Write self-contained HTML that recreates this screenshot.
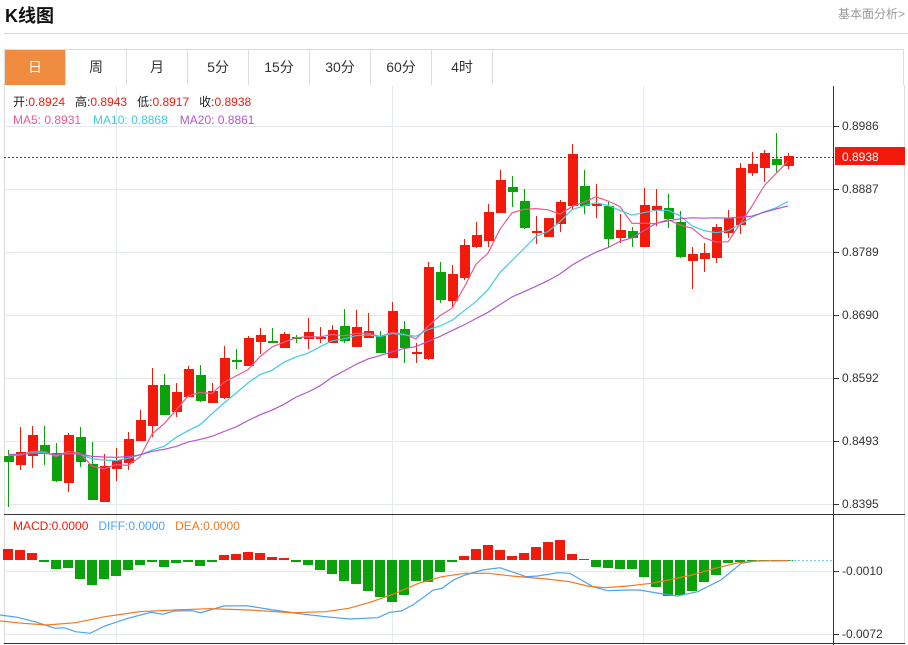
<!DOCTYPE html>
<html><head><meta charset="utf-8"><style>
*{margin:0;padding:0;box-sizing:border-box}
body{width:908px;height:645px;background:#fff;font-family:"Liberation Sans","Noto Sans CJK SC",sans-serif;position:relative;overflow:hidden}
.t{position:absolute;left:5px;top:2px;font-size:18px;font-weight:bold;color:#111}
.r{position:absolute;right:3px;top:5px;font-size:12px;color:#999}
.hr{position:absolute;left:4px;right:0;top:33px;border-top:1px solid #d6d6d6}
.tabs{position:absolute;left:4px;top:49px;width:900px;height:36px;border:1px solid #ddd;border-bottom:none;display:flex}
.tabs div{width:61px;height:35px;border-right:1px solid #ddd;text-align:center;line-height:35px;font-size:14px;color:#333}
.tabs .a{background:#f08c40;color:#fff}
svg{position:absolute;left:0;top:0}
</style></head><body>
<div class="t">K线图</div>
<div class="r">基本面分析&gt;</div>
<div class="hr"></div>
<div class="tabs"><div class="a">日</div><div>周</div><div>月</div><div>5分</div><div>15分</div><div>30分</div><div>60分</div><div>4时</div></div>
<svg id="s" width="908" height="645" font-family="Liberation Sans, Noto Sans CJK SC, sans-serif"></svg>
<script>
var C=[[456,462,450,507,0],[452,465,427,470,1],[435,456,426,468,1],[445,453,426,465,0],[453,481,443,482,0],[435,483,433,492,1],[437,462,427,467,0],[464,500,442,500,0],[466,502,454,502,1],[460,469,448,481,1],[439,463,432,470,1],[420,441,410,441,1],[385,426,368,437,1],[385,415,374,415,0],[392,412,383,417,1],[369,397,366,397,1],[375,401,365,402,0],[391,403,383,403,1],[358,398,346,399,1],[360,361,349,369,0],[338,366,336,366,1],[335,342,328,354,1],[341,343,328,343,0],[334,348,332,348,1],[337,339,335,343,0],[332,339,318,349,1],[337,339,327,343,1],[330,343,325,343,1],[326,341,309,343,0],[327,347,310,347,1],[331,338,313,338,1],[336,353,331,353,0],[311,358,302,358,1],[329,348,321,363,0],[352,353,343,363,1],[267,359,262,360,1],[272,300,262,303,0],[274,301,265,307,1],[245,278,239,280,1],[235,247,222,248,1],[212,241,204,247,1],[180,213,170,213,1],[187,192,176,207,0],[201,228,189,229,0],[231,232,216,244,1],[218,237,218,237,1],[202,224,200,232,1],[154,206,144,210,1],[186,206,170,214,0],[204,205,184,218,1],[206,239,202,247,0],[230,238,214,243,1],[231,238,227,247,0],[205,247,188,247,1],[206,210,189,226,1],[208,219,194,228,0],[222,257,211,258,0],[254,261,247,289,1],[253,259,243,272,1],[227,258,224,263,1],[218,233,210,238,1],[168,225,163,234,1],[164,173,152,176,1],[153,168,150,182,1],[159,165,133,172,0],[156,166,153,169,1]];
var M=[549,550,553,562,569,568,579,585,579,576,570,565,562,567,563,562,566,562,555,554,552,553,557,558,562,565,570,574,581,584,591,597,602,595,581,582,572,562,556,549,545,550,556,553,547,542,540,554,559,567,568,569,569,577,587,596,595,591,582,575,563,562,561,561,561,561];
var h='';
function L(x1,y1,x2,y2,c,w,d){h+='<line x1="'+x1+'" y1="'+y1+'" x2="'+x2+'" y2="'+y2+'" stroke="'+c+'" stroke-width="'+(w||1)+'"'+(d?' stroke-dasharray="'+d+'"':'')+'/>';}
function T(x,y,t,c,s){h+='<text x="'+x+'" y="'+y+'" fill="'+c+'" font-size="'+(s||12)+'">'+t+'</text>';}
var g='#e3e9ef';
[126,189,252,315,378,441,504].forEach(function(y){L(4,y+.5,833,y+.5,g)});
[571,634].forEach(function(y){L(4,y+.5,833,y+.5,g)});
[116,392,643].forEach(function(x){L(x+.5,86,x+.5,643,g)});
L(4.5,85,4.5,645,'#ddd');L(904.5,85,904.5,645,'#ddd');
L(833.5,86,833.5,645,'#333');
L(4,514.5,905,514.5,'#333');L(4,643.5,905,643.5,'#333');
var P=['0.8986','0.8887','0.8789','0.8690','0.8592','0.8493','0.8395'];
[126,189,252,315,378,441,504].forEach(function(y,i){L(834,y+.5,839,y+.5,'#333');T(842,y+4,P[i],'#333')});
L(834,571.5,839,571.5,'#333');T(842,575,'-0.0010','#333');
L(834,634.5,839,634.5,'#333');T(842,638,'-0.0072','#333');
C.forEach(function(c,i){var x=8+12*i,col=c[4]?'#f21a0a':'#0aa10a';L(x+.5,c[2],x+.5,c[3],col);var hh=Math.max(c[1]-c[0],2);h+='<rect x="'+(x-4)+'" y="'+c[0]+'" width="10" height="'+hh+'" fill="'+col+'"/>';});
var cl=C.map(function(c){return c[4]?c[0]:c[1]});
function ma(n,col){var p=[];for(var i=0;i<cl.length;i++){var s=0,k=0;for(var j=Math.max(0,i-n+1);j<=i;j++){s+=cl[j];k++}var v=s/k;if(i<n)v=(v*k+454*(n-k))/n;p.push((8+12*i)+','+v.toFixed(1))}h+='<polyline points="'+p.join(' ')+'" fill="none" stroke="'+col+'" stroke-width="1.2"/>';}
ma(5,'#ec5a8e');ma(10,'#3fcbe3');ma(20,'#b458c8');
L(4,157.5,833,157.5,'#ff0000',1,'2,2');
h+='<rect x="835" y="147" width="70" height="18" fill="#f21a0a"/>';T(842,161,'0.8938','#fff');
h+='<text x="13" y="106" font-size="12"><tspan fill="#222">开:</tspan><tspan fill="#f21a0a">0.8924</tspan><tspan fill="#222" dx="10">高:</tspan><tspan fill="#f21a0a">0.8943</tspan><tspan fill="#222" dx="10">低:</tspan><tspan fill="#f21a0a">0.8917</tspan><tspan fill="#222" dx="10">收:</tspan><tspan fill="#f21a0a">0.8938</tspan></text>';
h+='<text x="13" y="124" font-size="12"><tspan fill="#ec5a8e">MA5: 0.8931</tspan><tspan fill="#3fcbe3" dx="12">MA10: 0.8868</tspan><tspan fill="#b458c8" dx="12">MA20: 0.8861</tspan></text>';
h+='<text x="13" y="530" font-size="12"><tspan fill="#f21a0a">MACD:0.0000</tspan><tspan fill="#4aa3f0" dx="10">DIFF:0.0000</tspan><tspan fill="#f07820" dx="10">DEA:0.0000</tspan></text>';
M.forEach(function(v,i){var x=8+12*i-5,up=v<560;h+='<rect x="'+x+'" y="'+(up?v:560)+'" width="10" height="'+Math.max(Math.abs(v-560),1)+'" fill="'+(up?'#f21a0a':'#0aa10a')+'"/>';});
L(790,560.5,833,560.5,'#7cc8ea',1,'2,2');
function pl(a,col){var p=[];for(var i=0;i<a.length;i+=2)p.push((a[i]/1.72).toFixed(1)+','+(a[i+1]/3+500).toFixed(1));h+='<polyline points="'+p.join(' ')+'" fill="none" stroke="'+col+'" stroke-width="1.2"/>';}
pl([0,345,30,352,60,365,95,385,110,383,130,395,155,400,180,378,220,355,260,337,280,343,300,333,330,332,345,338,385,318,425,317,470,330,520,342,560,350,600,357,650,353,670,337,690,333,710,315,730,290,745,270,760,265,780,240,800,225,830,210,860,203,880,215,905,230,925,228,960,218,980,220,1000,240,1020,260,1045,272,1080,270,1100,270,1140,282,1165,288,1200,275,1240,240,1275,190,1300,183,1356,182],'#4aa3f0');
pl([0,363,40,370,80,375,130,368,180,350,240,335,300,330,360,326,430,330,500,338,560,335,600,325,640,305,680,280,720,250,760,230,800,220,840,220,880,228,940,237,980,245,1010,258,1040,263,1080,258,1120,250,1150,240,1190,225,1230,205,1270,188,1300,183,1356,182],'#f07820');
document.getElementById('s').innerHTML=h;
</script>
</body></html>
